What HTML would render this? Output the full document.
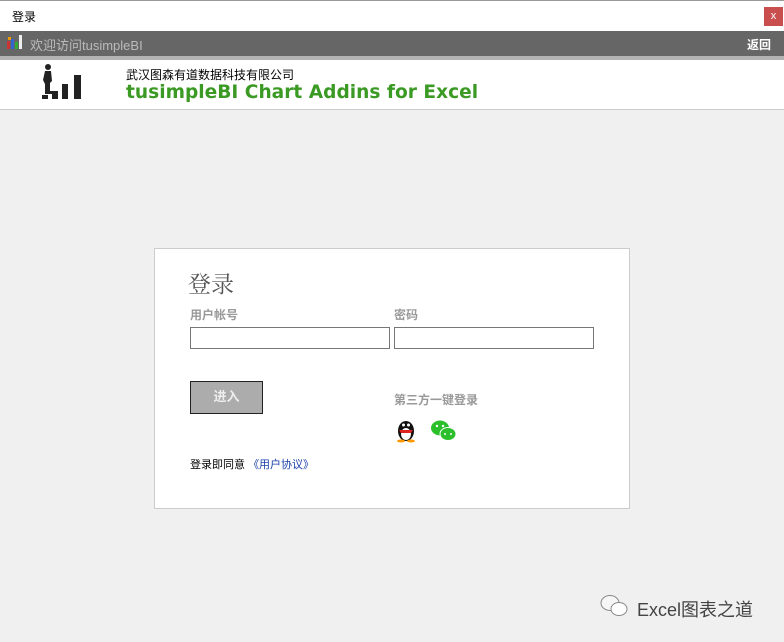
<!DOCTYPE html>
<html><head><meta charset="utf-8"><style>
*{margin:0;padding:0;box-sizing:border-box}
body{width:784px;height:642px;background:#f0f0f0;font-family:"Liberation Sans","Noto Sans CJK SC",sans-serif;position:relative;overflow:hidden}
.a{position:absolute}
</style></head><body>
<div class="a" style="left:0;top:0;width:784px;height:31px;background:#fff;border-top:1px solid #999"></div>
<div class="a" style="left:12px;top:8px;font-size:12px;color:#000">登录</div>
<div class="a" style="left:764px;top:7px;width:19px;height:19px;background:#c94f4f;color:#fff;font-size:11px;text-align:center;line-height:18px">x</div>
<div class="a" style="left:0;top:31px;width:784px;height:25px;background:#666"></div>
<div class="a" style="left:0;top:56px;width:784px;height:4px;background:#b3b3b3"></div>
<svg class="a" style="left:6px;top:33px" width="18" height="18"><rect x="1" y="8" width="3" height="8" fill="#c33"/><rect x="5" y="6" width="3" height="10" fill="#36c"/><rect x="9" y="9" width="3" height="7" fill="#3a3"/><rect x="13" y="2" width="3" height="14" fill="#eee"/><rect x="2" y="4" width="3" height="3" fill="#e90"/></svg>
<div class="a" style="left:30px;top:35px;font-size:13px;color:#bbb">欢迎访问tusimpleBI</div>
<div class="a" style="left:747px;top:36px;font-size:12px;color:#fff;font-weight:bold">返回</div>
<div class="a" style="left:0;top:60px;width:784px;height:50px;background:#fff;border-bottom:1px solid #ccc"></div>
<svg class="a" style="left:40px;top:63px" width="46" height="38"><circle cx="8" cy="4" r="3" fill="#222"/><path d="M5 8h6l1 10-2 2v8h3v3H5v-10l-2-4z" fill="#222"/><rect x="2" y="32" width="6" height="4" fill="#222"/><rect x="12" y="28" width="6" height="8" fill="#222"/><rect x="22" y="21" width="6" height="15" fill="#222"/><rect x="34" y="12" width="7" height="24" fill="#222"/></svg>
<div class="a" style="left:126px;top:66px;font-size:12px;color:#000">武汉图森有道数据科技有限公司</div>
<div class="a" style="left:126px;top:82px;font-size:18.6px;font-weight:bold;color:#3a9a24;font-family:'DejaVu Sans',sans-serif;white-space:nowrap">tusimpleBI Chart Addins for Excel</div>
<div class="a" style="left:154px;top:248px;width:476px;height:261px;background:#fff;border:1px solid #ccc"></div>
<div class="a" style="left:188px;top:266px;font-size:23px;color:#555;font-family:'Noto Serif CJK SC',serif">登录</div>
<div class="a" style="left:190px;top:306px;font-size:12px;color:#999;font-weight:bold">用户帐号</div>
<div class="a" style="left:394px;top:306px;font-size:12px;color:#999;font-weight:bold">密码</div>
<div class="a" style="left:190px;top:327px;width:200px;height:22px;border:1px solid #777"></div>
<div class="a" style="left:394px;top:327px;width:200px;height:22px;border:1px solid #777"></div>
<div class="a" style="left:190px;top:381px;width:73px;height:33px;background:#acacac;border:1px solid #222;color:#eee;font-size:13px;font-weight:bold;text-align:center;line-height:30px">进入</div>
<div class="a" style="left:394px;top:391px;font-size:12px;color:#999;font-weight:bold">第三方一键登录</div>
<svg class="a" style="left:395px;top:417px" width="22" height="26"><ellipse cx="11" cy="14" rx="8" ry="10" fill="#111"/><ellipse cx="11" cy="17" rx="5" ry="6" fill="#fff"/><circle cx="8.5" cy="8" r="1.5" fill="#fff"/><circle cx="13.5" cy="8" r="1.5" fill="#fff"/><path d="M4 13h14l-2 3H6z" fill="#d22"/><ellipse cx="6" cy="24" rx="4" ry="1.5" fill="#f90"/><ellipse cx="16" cy="24" rx="4" ry="1.5" fill="#f90"/></svg>
<svg class="a" style="left:430px;top:420px" width="28" height="22"><ellipse cx="10" cy="8" rx="9" ry="7.5" fill="#2bc02b"/><ellipse cx="18" cy="14" rx="8" ry="6.5" fill="#2bc02b" stroke="#fff" stroke-width="1"/><circle cx="7" cy="6" r="1.2" fill="#fff"/><circle cx="13" cy="6" r="1.2" fill="#fff"/><circle cx="15" cy="14" r="1" fill="#fff"/><circle cx="21" cy="14" r="1" fill="#fff"/></svg>
<div class="a" style="left:190px;top:456px;font-size:11px;color:#000">登录即同意 <span style="color:#1a3fa8">《用户协议》</span></div>
<svg class="a" style="left:599px;top:593px" width="34" height="26" fill="none" stroke="#888" stroke-width="1"><ellipse cx="11" cy="10" rx="9" ry="7.5" fill="#f6f6f6"/><ellipse cx="20" cy="16" rx="8" ry="6.5" fill="#fff"/></svg>
<div class="a" style="left:637px;top:596px;font-size:18px;color:#444">Excel图表之道</div>
</body></html>
